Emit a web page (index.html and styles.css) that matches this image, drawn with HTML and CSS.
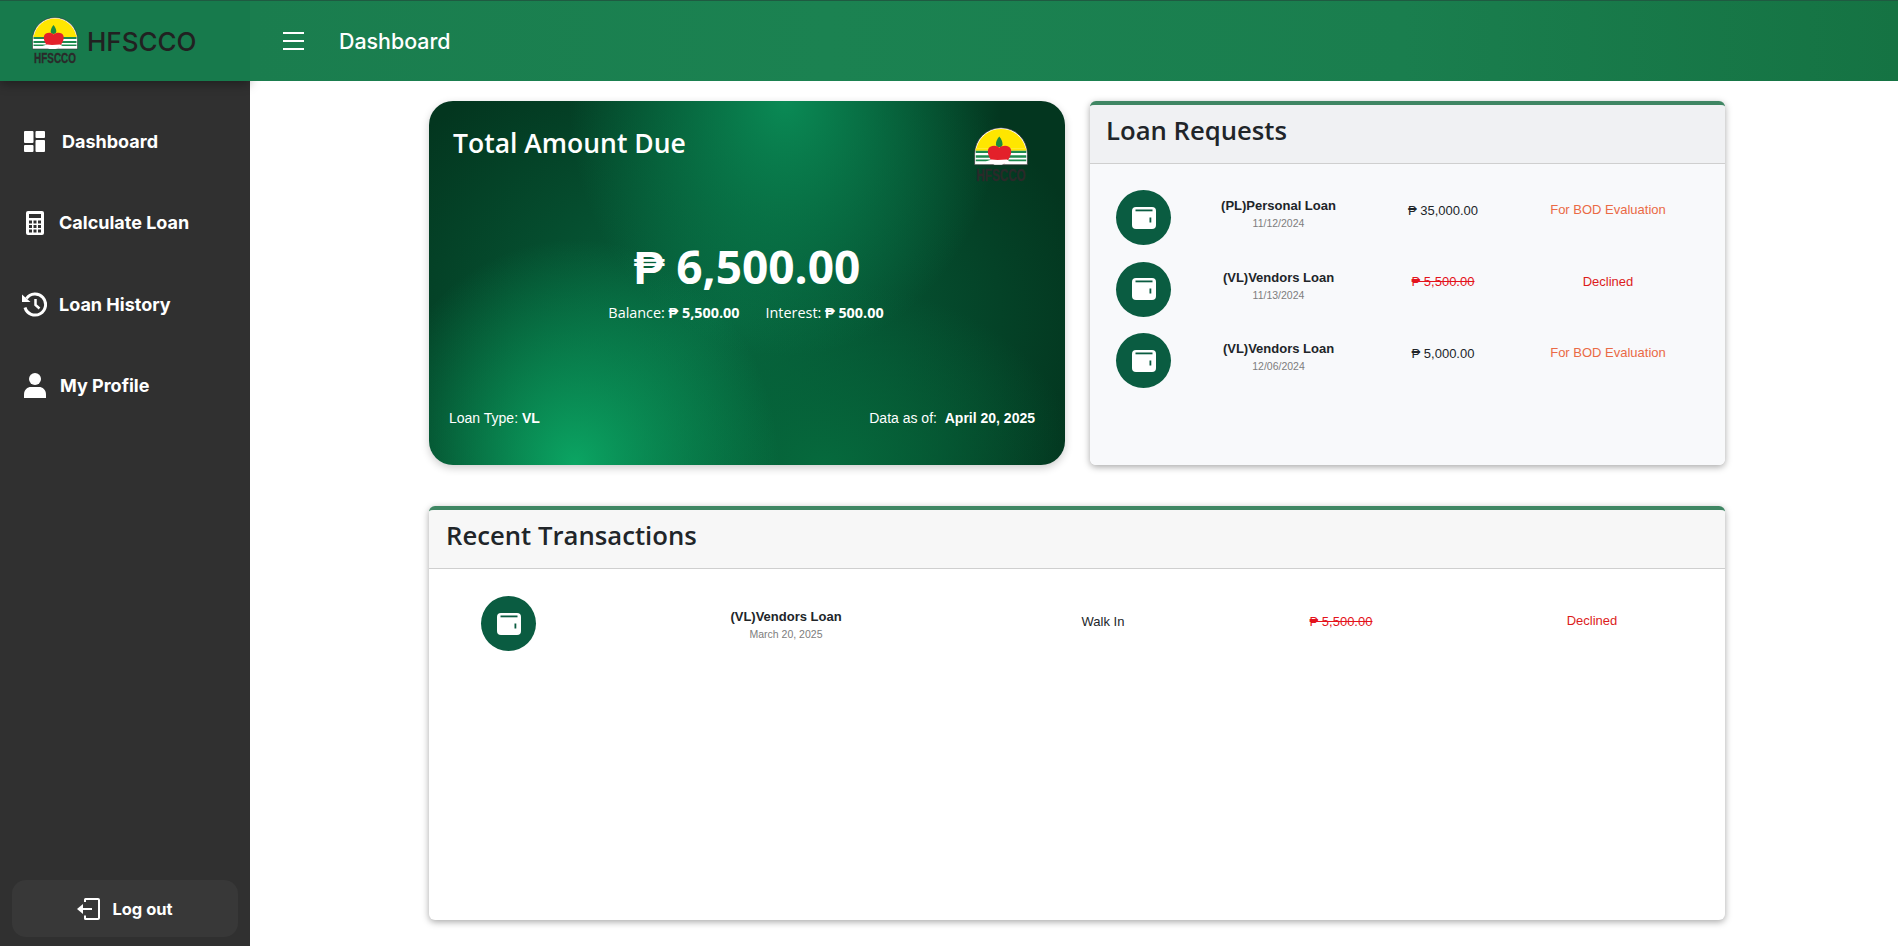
FILE: index.html
```html
<!DOCTYPE html>
<html lang="en">
<head>
    <meta charset="UTF-8">
    <meta name="viewport" content="width=device-width, initial-scale=1.0">
    <title>HFSCCO Dashboard</title>
    <link rel="stylesheet" href="styles.css">
</head>
<body>
    <svg class="defs" width="0" height="0">
        <symbol id="wallet" viewBox="0 0 24 22">
            <rect x="0" y="0" width="24" height="22" rx="4" fill="#fff"/>
            <rect x="3.500" y="2.500" width="17" height="1.800" fill="#0a5c41"/>
            <rect x="17.500" y="10.500" width="1.800" height="5" fill="#0a5c41"/>
        </symbol>
        <symbol id="logo-art" viewBox="0 0 46 34">
            <path d="M0.500 32V23a22.500 22.500 0 0 1 45 0v9z" fill="#fff" stroke="#333" stroke-width="0.600"/>
            <path d="M2.100 18A21.500 21.500 0 0 1 43.900 18z" fill="#ffe600"/>
            <path d="M1.500 18h43v2h-43z" fill="#ffe600"/>
            <path d="M1.500 20h43v2h-43zM1.500 24h43v2h-43zM1.500 27.500h43v1.500h-43z" fill="#1d8a4e"/>
            <path d="M21.500 8c-2 2.500-2.800 4.500-2.800 6.500 0 1.500 1.200 2.500 2.800 2.500s2.800-1 2.800-2.500c0-2-.8-4-2.800-6.500z" fill="#1c8a3f"/>
            <path d="M21.500 17.500c3-2.500 9-2.300 10 1.500 1 4-2 9-5 11.500-2 1-7 1-9.500 0-3-2.500-6-7.500-5-11.500 1-3.800 7.500-4 9.500-1.500z" fill="#e3202a"/>
            <path d="M10.500 29l4.500-1.500 5 .5 8-.5 2.500 1.500-7 3h-6l-2.500-1.500-4.500-.5z" fill="#fff"/>
        </symbol>
    </svg>

    <aside class="sidebar">
        <div class="brand">
            <svg class="brand-logo" viewBox="0 0 46 50">
                <use href="#logo-art" width="46" height="34"/>
                <text class="logo-text" text-anchor="middle" transform="translate(23 45.500) scale(0.710 1)">HFSCCO</text>
            </svg>
            <span class="brand-name">HFSCCO</span>
        </div>

        <nav class="nav">
            <a class="nav-item">
                <span class="nav-icon">
                    <svg width="22" height="21" viewBox="0 0 22 21" fill="#fff">
                        <rect x="0" y="0" width="9.500" height="12" rx="1"/>
                        <rect x="0" y="14" width="9.500" height="7" rx="1"/>
                        <rect x="11.500" y="0" width="9.500" height="7" rx="1"/>
                        <rect x="11.500" y="9" width="9.500" height="12" rx="1"/>
                    </svg>
                </span>
                <span class="nav-label nav-label-dash">Dashboard</span>
            </a>
            <a class="nav-item">
                <span class="nav-icon">
                    <svg width="18" height="24" viewBox="0 0 18 24">
                        <rect width="18" height="24" rx="2" fill="#fff"/>
                        <rect x="3" y="3" width="12" height="4" fill="#303030"/>
                        <g fill="#303030">
                            <rect x="3" y="9.500" width="3" height="3"/><rect x="7.500" y="9.500" width="3" height="3"/><rect x="12" y="9.500" width="3" height="3"/>
                            <rect x="3" y="14" width="3" height="3"/><rect x="7.500" y="14" width="3" height="3"/><rect x="12" y="14" width="3" height="3"/>
                            <rect x="3" y="18.500" width="3" height="3"/><rect x="7.500" y="18.500" width="3" height="3"/><rect x="12" y="18.500" width="3" height="3"/>
                        </g>
                    </svg>
                </span>
                <span class="nav-label">Calculate Loan</span>
            </a>
            <a class="nav-item">
                <span class="nav-icon">
                    <svg width="25" height="25" viewBox="0 0 25 25" fill="none" stroke="#fff">
                        <path d="M4.500 6.500a10.500 10.500 0 1 1-1.500 9" stroke-width="3"/>
                        <path d="M0 2.500l8.500 7.500h-8.500z" fill="#fff" stroke="none"/>
                        <path d="M13.500 7v6l4 3.500" stroke-width="2.500"/>
                    </svg>
                </span>
                <span class="nav-label">Loan History</span>
            </a>
            <a class="nav-item">
                <span class="nav-icon">
                    <svg width="22" height="25" viewBox="0 0 22 25" fill="#fff">
                        <circle cx="11" cy="6" r="6"/>
                        <path d="M0 25v-3.500c0-5 3.500-7.500 7-7.500h8c3.500 0 7 2.500 7 7.500v3.500z"/>
                    </svg>
                </span>
                <span class="nav-label nav-label-profile">My Profile</span>
            </a>
        </nav>

        <button class="logout" type="button">
            <svg width="23" height="22" viewBox="0 0 23 22" fill="none" stroke="#fff" stroke-width="2">
                <path d="M8 4v-2.500a.5.5 0 0 1 .5-.5h12.500a1 1 0 0 1 1 1v18a1 1 0 0 1-1 1h-12.500a.5.5 0 0 1-.5-.5v-3"/>
                <path d="M3 11h12"/>
                <path d="M0 11l6-5v10z" fill="#fff" stroke="none"/>
            </svg>
            <span>Log out</span>
        </button>
    </aside>

    <div class="page">
        <header class="topbar">
            <span class="burger"><i></i><i></i><i></i></span>
            <span class="topbar-title">Dashboard</span>
        </header>

        <main class="content">
            <div class="top-row">
                <section class="due-card">
                    <div class="due-head">
                        <h2>Total Amount Due</h2>
                        <svg class="due-logo" viewBox="0 0 46 50">
                            <use href="#logo-art" width="46" height="34"/>
                            <text class="logo-text" text-anchor="middle" transform="translate(23 45.500) scale(0.710 1)">HFSCCO</text>
                        </svg>
                    </div>
                    <div class="due-amount">₱ 6,500.00</div>
                    <div class="due-split">
                        <span>Balance: <b>₱ 5,500.00</b></span>
                        <span>Interest: <b>₱ 500.00</b></span>
                    </div>
                    <div class="due-foot">
                        <span>Loan Type: <b>VL</b></span>
                        <span>Data as of: &nbsp;<b>April 20, 2025</b></span>
                    </div>
                </section>

                <section class="panel panel-requests">
                    <div class="panel-head"><h2>Loan Requests</h2></div>
                    <div class="panel-body requests">
                        <div class="row">
                            <span class="wallet"><svg width="24" height="22"><use href="#wallet"/></svg></span>
                            <div class="loan"><strong>(PL)Personal Loan</strong><small>11/12/2024</small></div>
                            <div class="amount">₱ 35,000.00</div>
                            <div class="status pending">For BOD Evaluation</div>
                        </div>
                        <div class="row">
                            <span class="wallet"><svg width="24" height="22"><use href="#wallet"/></svg></span>
                            <div class="loan"><strong>(VL)Vendors Loan</strong><small>11/13/2024</small></div>
                            <div class="amount struck">₱ 5,500.00</div>
                            <div class="status declined">Declined</div>
                        </div>
                        <div class="row">
                            <span class="wallet"><svg width="24" height="22"><use href="#wallet"/></svg></span>
                            <div class="loan"><strong>(VL)Vendors Loan</strong><small>12/06/2024</small></div>
                            <div class="amount">₱ 5,000.00</div>
                            <div class="status pending">For BOD Evaluation</div>
                        </div>
                    </div>
                </section>
            </div>

            <section class="panel panel-recent">
                <div class="panel-head"><h2>Recent Transactions</h2></div>
                <div class="panel-body recent">
                    <div class="row">
                        <span class="wallet"><svg width="24" height="22"><use href="#wallet"/></svg></span>
                        <div class="loan"><strong>(VL)Vendors Loan</strong><small>March 20, 2025</small></div>
                        <div class="amount plain">Walk In</div>
                        <div class="amount struck">₱ 5,500.00</div>
                        <div class="status declined">Declined</div>
                    </div>
                </div>
            </section>
        </main>
    </div>
</body>
</html>
```

FILE: styles.css
```css
* {
    box-sizing: border-box;
}

body {
    font-family: "Liberation Sans", Arial, sans-serif;
    margin: 0;
    padding: 0;
    display: flex;
    height: 946px;
    overflow: hidden;
    background-color: #fff;
    color: #212529;
}

h2 {
    margin: 0;
}

.defs {
    position: absolute;
}

.logo-text {
    font-family: "Liberation Sans", Arial, sans-serif;
    font-size: 14px;
    font-weight: 700;
    fill: #2a2a2a;
    stroke: #2a2a2a;
    stroke-width: 0.3px;
}

/* sidebar */
.sidebar {
    width: 250px;
    flex: none;
    display: flex;
    flex-direction: column;
    background: #303030;
}

.brand {
    height: 81px;
    display: flex;
    align-items: center;
    gap: 9px;
    padding: 0 0 0 32px;
    background: #177a4c;
    border-top: 1px solid #1f5a41;
    box-shadow: 0 3px 10px rgba(0, 0, 0, 0.35);
}

.brand-logo {
    width: 46px;
    height: 50px;
    margin-top: 2px;
}

.brand-name {
    font-family: Inter, sans-serif;
    font-size: 26px;
    font-weight: 500;
    color: #212121;
}

.nav {
    padding-top: 20px;
    flex: 1;
}

.nav-item {
    height: 81.300px;
    display: flex;
    align-items: center;
    padding-left: 22px;
    gap: 12px;
    color: #fff;
}

.nav-icon {
    width: 25px;
    display: flex;
    justify-content: center;
}

.nav-label {
    font-family: Inter, sans-serif;
    font-size: 18px;
    font-weight: 700;
}

.nav-label-dash {
    margin-left: 3px;
}

.nav-label-profile {
    margin-left: 1px;
}

.logout {
    height: 57px;
    margin: 0 12px 9px;
    display: flex;
    align-items: center;
    justify-content: center;
    gap: 12px;
    background: #383838;
    border: none;
    border-radius: 14px;
    color: #fff;
    font-family: Inter, sans-serif;
    font-size: 16.500px;
    font-weight: 700;
}

/* top bar */
.page {
    flex: 1;
    display: flex;
    flex-direction: column;
    min-width: 0;
}

.topbar {
    height: 81px;
    flex: none;
    display: flex;
    align-items: center;
    padding-left: 33px;
    background: linear-gradient(90deg, #1a7d4e 0%, #1b8251 35%, #1a7e4e 70%, #157343 100%);
    border-top: 1px solid #1f5a41;
}

.burger {
    width: 21px;
    display: flex;
    flex-direction: column;
    gap: 6px;
}

.burger i {
    display: block;
    height: 2px;
    background: #fff;
}

.topbar-title {
    margin-left: 35px;
    font-family: Inter, sans-serif;
    font-size: 21.400px;
    font-weight: 500;
    color: #fff;
}

/* content */
.content {
    flex: 1;
    padding: 20px 173px 0 179px;
}

.top-row {
    display: flex;
    gap: 25px;
    margin-bottom: 41px;
}

.due-card {
    width: 636px;
    height: 364px;
    flex: none;
    display: flex;
    flex-direction: column;
    padding: 26px 30px 38px 20px;
    border-radius: 24px;
    color: #fff;
    background:
        radial-gradient(ellipse 32% 62% at 23% 100%, #0ba563 0%, rgba(11, 165, 99, 0) 100%),
        radial-gradient(ellipse 34% 70% at 56% 0%, #0a8a55 0%, rgba(10, 138, 85, 0) 100%),
        radial-gradient(ellipse 40% 50% at 62% 100%, #066a3d 0%, rgba(6, 106, 61, 0) 100%),
        radial-gradient(ellipse 60% 80% at 45% 60%, #07663f 0%, rgba(7, 102, 63, 0) 100%),
        #03361f;
    box-shadow: 0 3px 8px rgba(0, 0, 0, 0.2);
}

.due-head {
    height: 70px;
    display: flex;
    justify-content: space-between;
    align-items: flex-start;
    padding-left: 4px;
}

.due-head h2 {
    font-family: "Open Sans", sans-serif;
    font-size: 26.500px;
    font-weight: 600;
    line-height: 32px;
}

.due-logo {
    width: 54px;
    height: 59px;
    flex: none;
    margin-right: 7px;
}

.due-amount {
    margin-top: 40px;
    margin-right: -10px;
    text-align: center;
    font-family: "Open Sans", sans-serif;
    font-size: 46px;
    font-weight: 700;
    line-height: 58px;
}

.due-split {
    display: flex;
    justify-content: center;
    gap: 26px;
    margin-top: 8px;
    padding-left: 8px;
    font-family: "Open Sans", sans-serif;
    font-size: 14.400px;
    line-height: 20px;
}

.due-foot {
    display: flex;
    justify-content: space-between;
    margin-top: auto;
    font-size: 14px;
    line-height: 18px;
}

.panel {
    display: flex;
    flex-direction: column;
    border-top: 4px solid #3f8663;
    border-radius: 6px;
    background: #fff;
    box-shadow: 0 2px 7px rgba(0, 0, 0, 0.35);
    overflow: hidden;
}

.panel-requests {
    flex: 1;
    height: 364px;
}

.panel-recent {
    height: 414px;
}

.panel-head {
    height: 59px;
    flex: none;
    display: flex;
    align-items: center;
    padding: 0 0 7px 17px;
    background: #f7f7f7;
    border-bottom: 1px solid #cfcfcf;
}

.panel-requests .panel-head {
    padding-left: 16px;
    background: #f0f1f3;
}

.panel-head h2 {
    font-family: "Open Sans", sans-serif;
    font-size: 25.700px;
    font-weight: 600;
    color: #212529;
}

.panel-body {
    flex: 1;
}

.requests {
    background: #f8f9fb;
    padding: 26px 0 0 26px;
}

.recent {
    padding: 27px 0 0 52px;
}

.row {
    display: grid;
    align-items: center;
    text-align: center;
    height: 55px;
}

.requests .row {
    grid-template-columns: 79px 167px 162px 168px;
    margin-bottom: 16.500px;
}

.recent .row {
    grid-template-columns: 107px 396px 238px 238px 264px;
}

.wallet {
    width: 55px;
    height: 55px;
    display: flex;
    align-items: center;
    justify-content: center;
    border-radius: 50%;
    background: #0a5c41;
}

.loan strong {
    display: block;
    font-size: 13px;
    line-height: 16px;
    color: #212529;
}

.loan small {
    display: block;
    margin-top: 2px;
    font-size: 10.500px;
    line-height: 14px;
    color: #7d7d7d;
}

.amount,
.status {
    font-size: 13px;
}

.requests .loan {
    margin-top: -7px;
}

.requests .amount {
    margin-top: -15px;
}

.requests .status {
    margin-top: -16px;
}

.recent .loan {
    margin-top: 3px;
}

.recent .amount {
    margin-top: -5px;
}

.recent .status {
    margin-top: -7px;
}

.amount {
    color: #212529;
}

.amount.struck {
    color: #e4131c;
    text-decoration: line-through;
}

.status.pending {
    color: #ea6a45;
}

.status.declined {
    color: #dc1c1c;
}
```
